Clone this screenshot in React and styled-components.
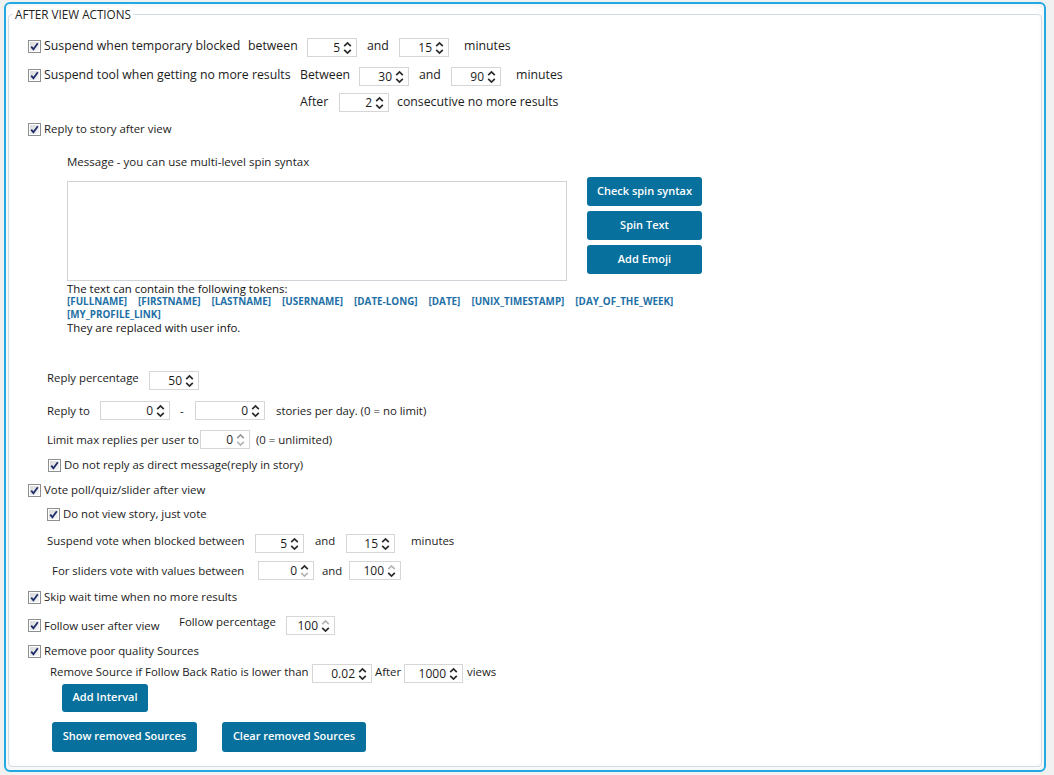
import React from "react";
import styled, { createGlobalStyle } from "styled-components";

const GlobalStyle = createGlobalStyle`
  html, body { margin: 0; padding: 0; background: #f1f1f1; }
  body { font-family: "Open Sans", "Noto Sans", sans-serif; color: #1c1c1c; }
  * { box-sizing: border-box; }
`;

const Window = styled.div`
  margin: 2px 0 0 4px;
  width: 1042px;
  height: 770px;
  border: 2px solid #23a9e1;
  border-radius: 6px;
  background: #ffffff;
  box-shadow: inset 0 0 8px rgba(0, 0, 0, 0.07);
  padding: 10px 2px 0 2px;
`;

const Group = styled.div`
  position: relative;
  height: 753px;
  border: 1px solid #d3dbe1;
  border-radius: 4px;
`;

const Legend = styled.span`
  position: absolute;
  top: -9px;
  left: 4px;
  padding: 0 2px;
  background: #fff;
  font-size: 11.7px;
  line-height: 16px;
  color: #222;
`;

const Content = styled.div`
  display: flex;
  flex-direction: column;
`;

const Row = styled.div`
  display: flex;
  align-items: ${(p) => p.$align || "center"};
  height: ${(p) => p.$h || 19}px;
  margin-top: ${(p) => p.$mt || 0}px;
  padding-left: ${(p) => p.$indent || 0}px;
  gap: ${(p) => p.$gap || 0}px;
`;

const Label = styled.span`
  flex: none;
  font-size: ${(p) => p.$fs || 11.4}px;
  line-height: 16px;
  white-space: nowrap;
  width: ${(p) => (p.$w ? `${p.$w}px` : "auto")};
  margin-left: ${(p) => p.$ml || 0}px;
  margin-bottom: ${(p) => (p.$up ? p.$up * 2 : 0)}px;
  color: #1c1c1c;
`;

const SpinBox = styled.div`
  flex: none;
  display: flex;
  align-items: center;
  justify-content: flex-end;
  width: ${(p) => p.$w || 50}px;
  height: 19px;
  border: 1px solid #d6d6d6;
  background: #fff;
  padding-right: 4px;
  margin-left: ${(p) => p.$ml || 0}px;
`;

const SpinValue = styled.span`
  font-size: 12px;
  line-height: 16px;
  color: #1c1c1c;
  margin-right: 3px;
`;

const Arrows = ({ up = "#2b2b2b", down = "#2b2b2b" }) => (
  <svg width="9" height="14" viewBox="0 0 9 14">
    <path d="M1.2 5.2 L4.5 1.9 L7.8 5.2" fill="none" stroke={up} strokeWidth="1.7" />
    <path d="M1.2 8.8 L4.5 12.1 L7.8 8.8" fill="none" stroke={down} strokeWidth="1.7" />
  </svg>
);

const Spinner = ({ value, w, ml, up, down }) => (
  <SpinBox $w={w} $ml={ml}>
    <SpinValue>{value}</SpinValue>
    <Arrows up={up} down={down} />
  </SpinBox>
);

const CheckWrap = styled.span`
  flex: none;
  display: inline-flex;
  width: 13px;
  height: 13px;
  margin-right: 3px;
  margin-bottom: ${(p) => (p.$up ? p.$up * 2 : 0)}px;
`;

const CheckBox = ({ up }) => (
  <CheckWrap $up={up}>
    <svg width="13" height="13" viewBox="0 0 13 13">
      <defs>
        <linearGradient id="cbg" x1="0" y1="0" x2="1" y2="1">
          <stop offset="0" stopColor="#d9d9d9" />
          <stop offset="1" stopColor="#f7f7f7" />
        </linearGradient>
      </defs>
      <rect x="0.5" y="0.5" width="12" height="12" fill="#fff" stroke="#8e8f8f" />
      <rect x="2" y="2" width="9" height="9" fill="url(#cbg)" />
      <path d="M3.2 6.6 L5.4 9.2 L9.8 3.2" fill="none" stroke="#1f2e6b" strokeWidth="1.8" />
    </svg>
  </CheckWrap>
);

const Check = ({ children, w, fs, up }) => (
  <>
    <CheckBox up={up} />
    <Label $w={w} $fs={fs} $up={up}>
      {children}
    </Label>
  </>
);

const Editor = styled.div`
  display: flex;
  align-items: flex-start;
  height: 104px;
  margin-top: ${(p) => p.$mt || 0}px;
  padding-left: ${(p) => p.$indent || 0}px;
`;

const TextArea = styled.div`
  margin-top: 4px;
  width: 500px;
  height: 100px;
  border: 1px solid #cfd2d6;
  background: #fff;
`;

const ButtonColumn = styled.div`
  display: flex;
  flex-direction: column;
  gap: 5px;
  margin-left: 20px;
`;

const Button = styled.div`
  flex: none;
  display: flex;
  align-items: center;
  justify-content: center;
  width: ${(p) => p.$w}px;
  height: ${(p) => p.$h || 29}px;
  background: #07709c;
  border-radius: 3px;
  color: #fff;
  font-size: 11px;
  font-weight: 600;
  white-space: nowrap;
  padding-bottom: 3px;
`;

const TokenBlock = styled.div`
  display: flex;
  flex-direction: column;
  margin-top: 1px;
  padding-left: ${(p) => p.$indent}px;
`;

const InfoLine = styled.div`
  height: 13px;
  font-size: 11.4px;
  line-height: 13px;
  color: #111;
  white-space: nowrap;
`;

const TokenLine = styled.div`
  display: flex;
  gap: 11px;
  height: 13px;
  align-items: center;
`;

const Token = styled.span`
  font-size: 9.85px;
  font-weight: 700;
  color: #1d6fa6;
  white-space: nowrap;
  line-height: 13px;
`;

const GRAY = "#b5b5b5";
const TOP = 12.3;

export default function App() {
  const tokens1 = [
    "[FULLNAME]",
    "[FIRSTNAME]",
    "[LASTNAME]",
    "[USERNAME]",
    "[DATE-LONG]",
    "[DATE]",
    "[UNIX_TIMESTAMP]",
    "[DAY_OF_THE_WEEK]",
  ];
  return (
    <>
      <GlobalStyle />
      <Window>
        <Group>
          <Legend>AFTER VIEW ACTIONS</Legend>
          <Content>
            <Row $mt={23} $indent={19}>
              <Check w={204} fs={TOP} up={1.5}>
                Suspend when temporary blocked
              </Check>
              <Label $fs={TOP} $w={59} $up={1.5}>between</Label>
              <Spinner value="5" />
              <Label $fs={TOP} $ml={10} $w={32} $up={1.5}>and</Label>
              <Spinner value="15" />
              <Label $fs={TOP} $ml={15} $up={1.5}>minutes</Label>
            </Row>
            <Row $mt={10} $indent={19}>
              <Check w={256} fs={TOP} up={1.5}>
                Suspend tool when getting no more results
              </Check>
              <Label $fs={TOP} $w={59} $up={1.5}>Between</Label>
              <Spinner value="30" />
              <Label $fs={TOP} $ml={10} $w={32} $up={1.5}>and</Label>
              <Spinner value="90" />
              <Label $fs={TOP} $ml={15} $up={1.5}>minutes</Label>
            </Row>
            <Row $mt={7} $indent={291}>
              <Label $fs={TOP} $w={39} $up={1}>After</Label>
              <Spinner value="2" />
              <Label $fs={TOP} $ml={8} $up={1}>consecutive no more results</Label>
            </Row>
            <Row $mt={8} $indent={19}>
              <Check up={0.5}>Reply to story after view</Check>
            </Row>
            <Row $mt={15} $h={16} $indent={58}>
              <Label $fs={11.5}>Message - you can use multi-level spin syntax</Label>
            </Row>
            <Editor $mt={7} $indent={58}>
              <TextArea />
              <ButtonColumn>
                <Button $w={115}>Check spin syntax</Button>
                <Button $w={115}>Spin Text</Button>
                <Button $w={115}>Add Emoji</Button>
              </ButtonColumn>
            </Editor>
            <TokenBlock $indent={58}>
              <InfoLine>The text can contain the following tokens:</InfoLine>
              <TokenLine>
                {tokens1.map((t) => (
                  <Token key={t}>{t}</Token>
                ))}
              </TokenLine>
              <TokenLine>
                <Token>[MY_PROFILE_LINK]</Token>
              </TokenLine>
              <InfoLine>They are replaced with user info.</InfoLine>
            </TokenBlock>
            <Row $mt={37} $indent={38}>
              <Label $w={102} $up={3}>Reply percentage</Label>
              <Spinner value="50" />
            </Row>
            <Row $mt={11} $indent={38}>
              <Label $w={53}>Reply to</Label>
              <Spinner value="0" w={70} />
              <Label $ml={10} $w={15}>-</Label>
              <Spinner value="0" w={70} />
              <Label $ml={11}>stories per day. (0 = no limit)</Label>
            </Row>
            <Row $mt={10} $indent={38}>
              <Label $w={153}>Limit max replies per user to</Label>
              <Spinner value="0" up="#9a9a9a" down={GRAY} />
              <Label $ml={6}>(0 = unlimited)</Label>
            </Row>
            <Row $mt={7} $indent={39}>
              <Check up={0.5}>Do not reply as direct message(reply in story)</Check>
            </Row>
            <Row $mt={6} $indent={19}>
              <Check up={0.5}>Vote poll/quiz/slider after view</Check>
            </Row>
            <Row $mt={5} $indent={38}>
              <Check up={0.5}>Do not view story, just vote</Check>
            </Row>
            <Row $mt={10} $indent={38}>
              <Label $w={208} $up={3}>Suspend vote when blocked between</Label>
              <Spinner value="5" w={49} />
              <Label $ml={11} $w={31} $up={3}>and</Label>
              <Spinner value="15" w={49} />
              <Label $ml={16} $up={3}>minutes</Label>
            </Row>
            <Row $mt={8} $indent={43}>
              <Label $w={206}>For sliders vote with values between</Label>
              <Spinner value="0" w={56} down={GRAY} />
              <Label $ml={8} $w={27}>and</Label>
              <Spinner value="100" w={52} up={GRAY} />
            </Row>
            <Row $mt={8} $indent={19}>
              <Check up={0.5}>Skip wait time when no more results</Check>
            </Row>
            <Row $mt={9} $indent={19}>
              <Check w={135}>Follow user after view</Check>
              <Label $w={107} $up={4}>Follow percentage</Label>
              <Spinner value="100" w={49} up={GRAY} />
            </Row>
            <Row $mt={7} $indent={19}>
              <Check up={0.5}>Remove poor quality Sources</Check>
            </Row>
            <Row $mt={3} $indent={41}>
              <Label $w={262} $up={2}>Remove Source if Follow Back Ratio is lower than</Label>
              <Spinner value="0.02" w={60} />
              <Label $ml={3} $w={29} $up={2}>After</Label>
              <Spinner value="1000" w={59} />
              <Label $ml={4} $up={2}>views</Label>
            </Row>
            <Row $mt={1} $h={28} $indent={53}>
              <Button $w={86} $h={28}>Add Interval</Button>
            </Row>
            <Row $mt={10} $h={30} $indent={43} $gap={25}>
              <Button $w={145} $h={30}>Show removed Sources</Button>
              <Button $w={144} $h={30}>Clear removed Sources</Button>
            </Row>
          </Content>
        </Group>
      </Window>
    </>
  );
}
